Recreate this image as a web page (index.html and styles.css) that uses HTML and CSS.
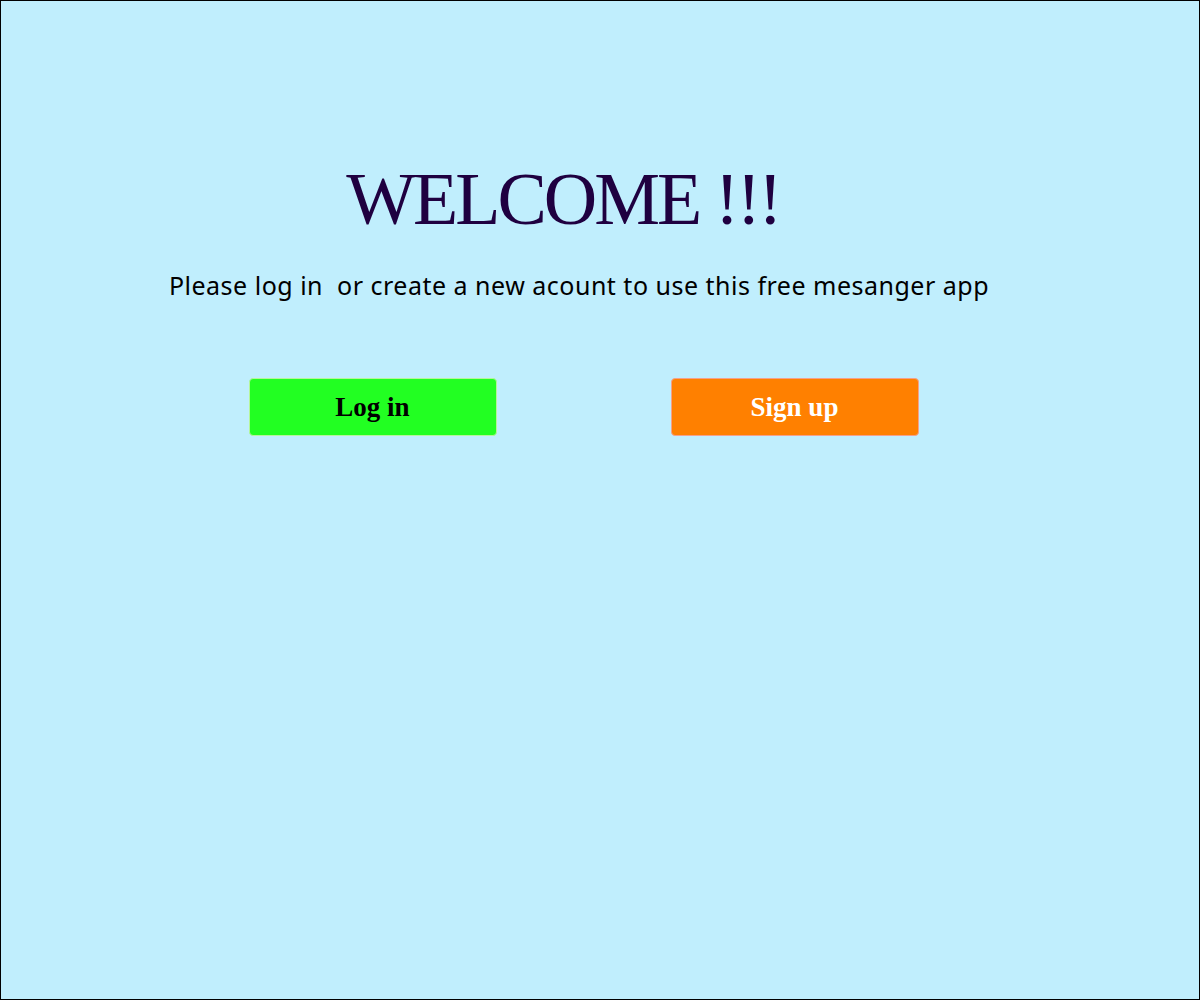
FILE: index.html
```html
<!DOCTYPE html>
<html>
<head>
<meta charset="utf-8">
<link rel="stylesheet" href="styles.css">
</head>
<body>
<div class="page">
  <h1 class="title">WELCOME !!!</h1>
  <p class="subtitle">Please log in&nbsp; or create a new acount to use this free mesanger app</p>
  <div class="actions">
    <button class="btn btn-login">Log in</button>
    <button class="btn btn-signup">Sign up</button>
  </div>
</div>
</body>
</html>
```
FILE: styles.css
```css
html, body {
  margin: 0;
  padding: 0;
}
.page {
  box-sizing: border-box;
  width: 1200px;
  height: 1000px;
  border: 1px solid #000;
  background: #c0eefd;
  display: flex;
  flex-direction: column;
  align-items: center;
  padding-top: 150px;
}
.title {
  margin: 0 0 0 -74px;
  font-family: "Liberation Serif", serif;
  font-weight: normal;
  font-size: 74px;
  letter-spacing: -3px;
  line-height: 96px;
  color: #1f0040;
}
.subtitle {
  margin: 23px 0 0 -42px;
  font-family: "Noto Sans", sans-serif;
  font-size: 25px;
  letter-spacing: 0.5px;
  line-height: 30px;
  color: #000;
}
.actions {
  display: flex;
  gap: 174px;
  margin: 78px 0 0 -33px;
}
.btn {
  width: 248px;
  height: 58px;
  border-radius: 4px;
  font-family: "Liberation Serif", serif;
  font-weight: bold;
  font-size: 27px;
  cursor: pointer;
  padding: 0;
}
.btn-login {
  background: #22ff22;
  border: 1px solid #b6f59a;
  color: #000;
}
.btn-signup {
  background: #ff8000;
  border: 1px solid #f5a08a;
  color: #fff;
}
```
